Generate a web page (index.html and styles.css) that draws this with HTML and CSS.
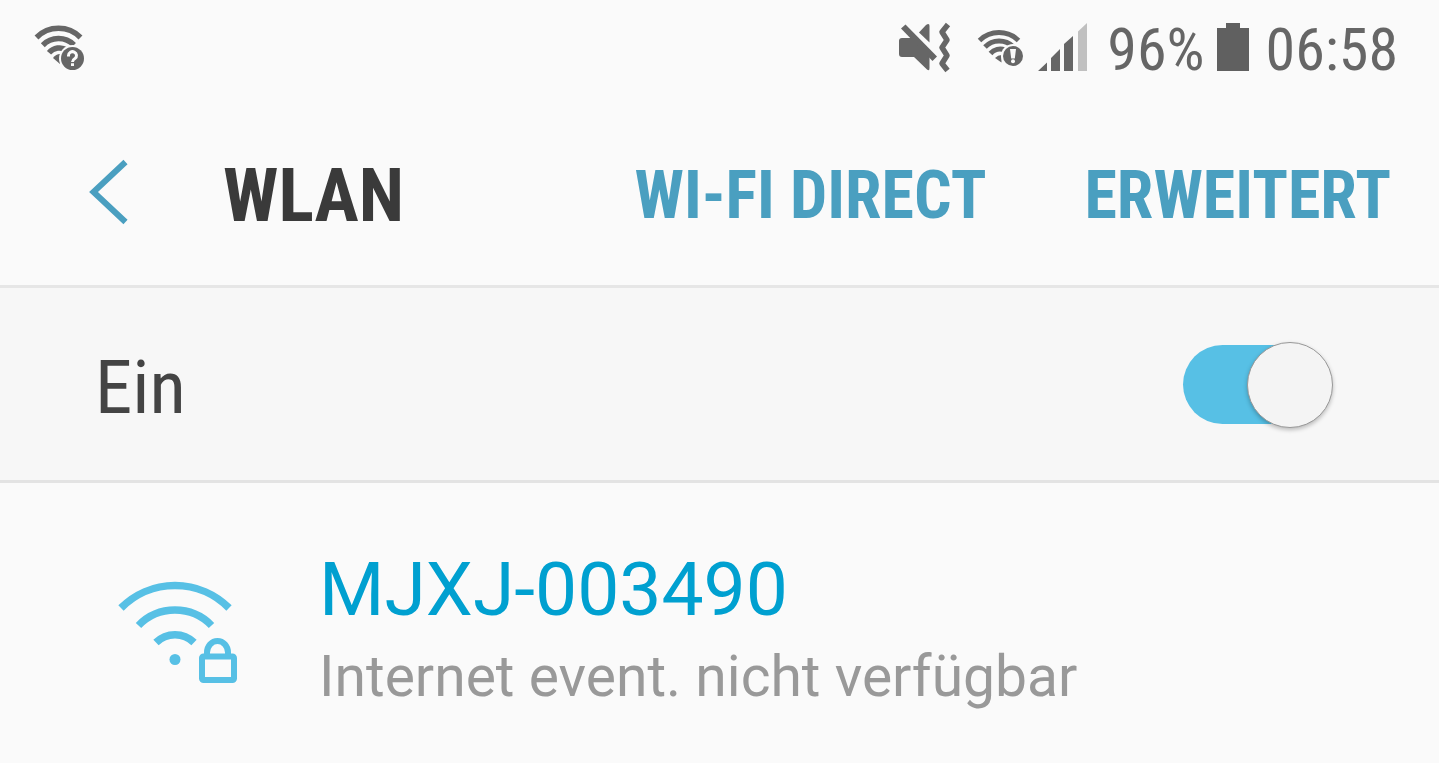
FILE: index.html
```html
<!DOCTYPE html>
<html lang="de">
<head>
<meta charset="utf-8">
<meta name="viewport" content="width=device-width, initial-scale=1">
<title>WLAN</title>
<link rel="stylesheet" href="styles.css">
</head>
<body>
<div class="status-bar">
  <svg class="status-wifi-unknown" width="56" height="56" viewBox="30 21 56 56" aria-hidden="true">
    <g class="stroke-grey" stroke-width="5.500">
      <path d="M36.500 37.500A31 31 0 0 1 80.500 37.500"/>
      <path d="M42.800 45.200A22 22 0 0 1 74 45"/>
      <path d="M49 52.800A14 14 0 0 1 67 50"/>
    </g>
    <path class="fill-grey" d="M53 58Q56 54 60 54V64z"/>
    <circle class="halo" cx="72.500" cy="58.500" r="13.500"/>
    <circle class="fill-grey" cx="72.500" cy="58.500" r="11.500"/>
    <path class="mark" d="M68.500 56.500V55.500a4 3.800 0 1 1 6.400 3Q72.500 60 72.500 62M72.500 63.300v2.800"/>
  </svg>
  <div class="status-right">
    <svg class="status-mute" width="56" height="56" viewBox="897 21 56 56" aria-hidden="true">
      <path class="fill-grey" d="M902 38H912L929.500 56V68Q929.500 71.500 927 69.500L914 57H902Q899 57 899 54V41Q899 38 902 38z"/>
      <path class="fill-grey" d="M901 28.500L905.500 24.500 937 56.500 932.500 61z"/>
      <path class="fill-grey" d="M919 32.500L926 25Q929.500 22.500 929.500 26V42.500z"/>
      <path class="stroke-grey" stroke-width="5.500" stroke-linejoin="round" d="M948 24.500L942 32 947 40 942 47.500 947 55.500 942 63.500 947.500 70.500"/>
    </svg>
    <svg class="status-wifi" width="52" height="56" viewBox="975 21 52 56" aria-hidden="true">
      <g class="stroke-grey" stroke-width="5">
        <path d="M979.500 40.500A28 28 0 0 1 1018.500 40.500"/>
        <path d="M985 47A20 20 0 0 1 1013 46.500"/>
        <path d="M990.500 53.500A13 13 0 0 1 1005 50"/>
      </g>
      <path class="fill-grey" d="M995 58Q998 55 1001.500 55V62.500z"/>
      <circle class="halo" cx="1013" cy="56" r="12"/>
      <circle class="fill-grey" cx="1013" cy="56" r="10"/>
      <path class="mark-fill" d="M1010 49H1016L1014.800 58.500H1011.200z"/>
      <circle class="mark-fill" cx="1013" cy="61.200" r="2"/>
    </svg>
    <svg class="status-signal" width="54" height="56" viewBox="1037 21 54 56" aria-hidden="true">
      <path class="fill-grey" d="M1038 71L1047 62.500V71zM1051 71V58L1060 49V71zM1064 71V44L1073 36V71z"/>
      <path class="fill-light" d="M1078 71V31.500L1087 23V71z"/>
    </svg>
    <span class="battery-text">96%</span>
    <svg class="status-battery" width="32" height="56" viewBox="1217 21 32 56" aria-hidden="true">
      <path class="fill-battery" d="M1226 23H1240V28H1249V71H1217V28H1226z"/>
    </svg>
    <time class="clock">06:58</time>
  </div>
</div>
<header class="app-bar">
  <button class="back" type="button" aria-label="Zurück">
    <svg width="44" height="68" viewBox="86 158 44 68" aria-hidden="true">
      <path d="M125.500 162L93.500 192 125.500 222"/>
    </svg>
  </button>
  <h1 class="title">WLAN</h1>
  <nav class="actions">
    <button class="action" type="button">WI-FI DIRECT</button>
    <button class="action" type="button">ERWEITERT</button>
  </nav>
</header>
<main>
  <div class="switch-row">
    <label class="switch-label" for="wlan-switch">Ein</label>
    <input class="switch" id="wlan-switch" type="checkbox" role="switch" checked>
  </div>
  <ul class="networks">
    <li class="network">
      <svg class="network-icon" width="122" height="106" viewBox="117 580 122 106" aria-hidden="true">
        <g class="arcs">
          <path d="M121 608A76 76 0 0 1 229 608"/>
          <path d="M138.500 625.500A51 51 0 0 1 211.500 625.500"/>
          <path d="M156 642.500A27 27 0 0 1 194 642.500"/>
        </g>
        <circle class="dot" cx="175" cy="659.500" r="5.500"/>
        <rect class="lock" x="202" y="656.500" width="32" height="23.500" rx="1.500"/>
        <path class="lock" d="M207 656V652.500a10.500 11.500 0 0 1 21 0V656"/>
      </svg>
      <div class="network-text">
        <span class="network-name">MJXJ-003490</span>
        <span class="network-state">Internet event. nicht verfügbar</span>
      </div>
    </li>
  </ul>
</main>
</body>
</html>
```
FILE: styles.css
```css
*,
*::before,
*::after {
  box-sizing: border-box;
}

body {
  margin: 0;
  background: #fafafa;
  font-family: Roboto, "Liberation Sans", sans-serif;
}

svg {
  display: block;
  flex: none;
}

.status-bar,
.app-bar,
.switch-row {
  font-family: "Roboto Condensed", Roboto, "Liberation Sans", sans-serif;
}

.status-bar {
  display: flex;
  align-items: center;
  justify-content: space-between;
  height: 98px;
  padding: 0 41px 0 30px;
  color: #666;
  font-size: 60px;
  line-height: 70px;
}

.status-right {
  display: flex;
  align-items: center;
}

.status-wifi {
  margin-left: 22px;
}

.status-signal {
  margin-left: 10px;
}

.battery-text {
  margin-left: 16px;
}

.status-battery {
  margin: 0 17px 0 12px;
}

.battery-text,
.clock {
  padding-top: 2px;
}

.fill-grey {
  fill: #666;
}

.fill-battery {
  fill: #606060;
}

.fill-light {
  fill: #c0c0c0;
}

.halo,
.mark-fill {
  fill: #fafafa;
}

.stroke-grey {
  fill: none;
  stroke: #666;
}

.mark {
  fill: none;
  stroke: #fafafa;
  stroke-width: 3;
}

.app-bar {
  display: flex;
  align-items: center;
  height: 190px;
  padding: 0 48px 0 86px;
  border-bottom: 3px solid #e6e6e6;
}

.back,
.action {
  padding: 0;
  border: 0;
  background: none;
  cursor: pointer;
}

.back path {
  fill: none;
  stroke: #4a9fc0;
  stroke-width: 6;
}

.title {
  margin: 0 0 0 93px;
  padding-top: 8px;
  color: #3a3a3a;
  font-size: 74px;
  font-weight: 700;
  line-height: 90px;
}

.actions {
  display: flex;
  gap: 98px;
  margin-left: auto;
  padding-top: 8px;
}

.action {
  color: #4a9fc0;
  font-family: inherit;
  font-size: 66px;
  font-weight: 700;
  line-height: 90px;
  white-space: nowrap;
}

.switch-row {
  display: flex;
  align-items: center;
  justify-content: space-between;
  height: 195px;
  padding: 0 106px 0 95px;
  border-bottom: 3px solid #e3e3e3;
  background: #f7f7f7;
}

.switch-label {
  padding-top: 6px;
  color: #444;
  font-size: 75px;
  line-height: 90px;
}

.switch {
  position: relative;
  width: 150px;
  height: 86px;
  margin: 0;
  appearance: none;
  cursor: pointer;
}

.switch::before {
  content: "";
  position: absolute;
  inset: 4px 20px 3px 0;
  border-radius: 40px;
  background: #57c0e5;
}

.switch::after {
  content: "";
  position: absolute;
  top: 1px;
  right: 0;
  width: 86px;
  height: 86px;
  border: 1px solid #999;
  border-radius: 50%;
  background: #f4f4f4;
  box-shadow: 0 2px 4px rgba(0, 0, 0, 0.25);
}

.networks {
  margin: 0;
  padding: 0;
  list-style: none;
}

.network {
  display: flex;
  align-items: center;
  gap: 80px;
  padding: 62px 40px 40px 117px;
}

.arcs {
  fill: none;
  stroke: #57c0e5;
  stroke-width: 7.5;
}

.dot {
  fill: #57c0e5;
}

.lock {
  fill: none;
  stroke: #57c0e5;
  stroke-width: 6;
}

.network-text {
  display: flex;
  flex-direction: column;
  line-height: 88px;
}

.network-name {
  color: #00a0d0;
  font-size: 75px;
}

.network-state {
  color: #999;
  font-size: 57px;
}
```
